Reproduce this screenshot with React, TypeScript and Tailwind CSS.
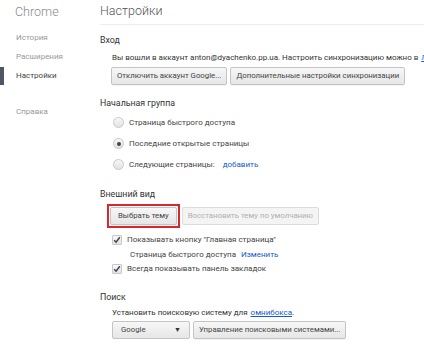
import React from "react";

const F = { fontFamily: 'Roboto, "Noto Sans", sans-serif' };

function Btn({ children, disabled, className = "" }: { children: React.ReactNode; disabled?: boolean; className?: string }) {
  return (
    <div
      className={
        "h-[18px] px-[5px] flex items-center whitespace-nowrap rounded-[2px] border text-[7.8px] " +
        (disabled
          ? "border-[#dcdcdc] bg-[#f4f4f4] text-[#b0b0b0] "
          : "border-[#c4c4c4] bg-gradient-to-b from-[#f7f7f7] to-[#e6e6e6] text-[#444] shadow-[0_1px_0_rgba(0,0,0,0.05)] ") +
        className
      }
    >
      {children}
    </div>
  );
}

function Radio({ checked }: { checked?: boolean }) {
  return (
    <div className="w-[11px] h-[11px] rounded-full border border-[#c8c8c8] bg-gradient-to-b from-[#f8f8f8] to-[#e2e2e2] flex items-center justify-center">
      {checked && <div className="w-[4px] h-[4px] rounded-full bg-[#444]" />}
    </div>
  );
}

function Check() {
  return (
    <div className="w-[10px] h-[10px] rounded-[1px] border border-[#c8c8c8] bg-gradient-to-b from-[#f8f8f8] to-[#e4e4e4] flex items-center justify-center">
      <svg width="8" height="8" viewBox="0 0 8 8">
        <path d="M1.2 4.2 L3.1 6.2 L6.8 1.2" fill="none" stroke="#444" strokeWidth="1.5" />
      </svg>
    </div>
  );
}

export default function App() {
  return (
    <div className="w-[424px] h-[345px] bg-white overflow-hidden flex text-[#333]" style={F}>
      {/* Sidebar */}
      <div className="w-[100px] shrink-0 flex flex-col">
        <div className="h-[24px] pl-[15px] flex items-center text-[12.5px] text-[#8a8a8a] font-light">Chrome</div>
        <div className="mt-[4px] h-[19px] pl-[16px] flex items-center text-[8px] text-[#999]">История</div>
        <div className="h-[19px] pl-[16px] flex items-center text-[8px] text-[#999]">Расширения</div>
        <div className="h-[19px] flex items-center text-[8px] text-[#444]">
          <div className="w-[4px] h-[18px] bg-[#4e5565] mr-[12px]" />
          Настройки
        </div>
        <div className="h-[17px]" />
        <div className="h-[19px] pl-[16px] flex items-center text-[8px] text-[#999]">Справка</div>
      </div>

      {/* Main */}
      <div className="flex-1 flex flex-col min-w-0">
        <div className="h-[25px] flex items-center border-b border-[#eeeeee] text-[12.5px] text-[#555] font-light pb-[1px]">
          Настройки
        </div>

        {/* Вход */}
        <div className="mt-[9px] h-[14px] flex items-center text-[8.8px] text-[#333]">Вход</div>
        <div className="pl-[12px] mt-[4px] h-[12px] flex items-center text-[8px] text-[#333] whitespace-nowrap">
          Вы вошли в аккаунт anton@dyachenko.pp.ua. Настроить синхронизацию можно в{" "}
          <span className="ml-[3px] text-[#1558d6] underline">Личном кабинете</span>
        </div>
        <div className="pl-[11px] mt-[3px] flex gap-[3px]">
          <Btn>Отключить аккаунт Google...</Btn>
          <Btn>Дополнительные настройки синхронизации</Btn>
        </div>

        {/* Начальная группа */}
        <div className="mt-[12px] h-[14px] flex items-center text-[8.8px] text-[#333]">Начальная группа</div>
        <div className="pl-[13px] flex flex-col mt-[1px]">
          <div className="h-[21px] flex items-center gap-[5px] text-[8px] text-[#444]">
            <Radio /> Страница быстрого доступа
          </div>
          <div className="h-[21px] flex items-center gap-[5px] text-[8px] text-[#444]">
            <Radio checked /> Последние открытые страницы
          </div>
          <div className="h-[21px] flex items-center gap-[5px] text-[8px] text-[#444]">
            <Radio /> Следующие страницы: <span className="ml-[3px] text-[#1558d6]">добавить</span>
          </div>
        </div>

        {/* Внешний вид */}
        <div className="mt-[13px] h-[14px] flex items-center text-[8.8px] text-[#333]">Внешний вид</div>
        <div className="pl-[7px] mt-[2px] flex items-center gap-[2px]">
          <div className="border-2 border-[#d9262c] p-[1px]">
            <Btn className="px-[7px]">Выбрать тему</Btn>
          </div>
          <Btn disabled>Восстановить тему по умолчанию</Btn>
        </div>
        <div className="pl-[12px] mt-[5px] flex flex-col">
          <div className="h-[14px] flex items-center gap-[5px] text-[8px] text-[#444]">
            <Check /> Показывать кнопку "Главная страница"
          </div>
          <div className="h-[15px] pl-[18px] flex items-center text-[8px] text-[#444]">
            Страница быстрого доступа <span className="ml-[5px] text-[#1558d6]">Изменить</span>
          </div>
          <div className="h-[13px] flex items-center gap-[5px] text-[8px] text-[#444]">
            <Check /> Всегда показывать панель закладок
          </div>
        </div>

        {/* Поиск */}
        <div className="mt-[16px] h-[14px] flex items-center text-[8.8px] text-[#333]">Поиск</div>
        <div className="pl-[12px] mt-[2px] h-[12px] flex items-center text-[8px] text-[#333] whitespace-nowrap">
          Установить поисковую систему для <span className="ml-[3px] text-[#1558d6] underline">омнибокса</span>.
        </div>
        <div className="pl-[12px] mt-[2px] flex gap-[3px]">
          <div className="w-[78px] h-[18px] px-[8px] flex items-center justify-between rounded-[2px] border border-[#c4c4c4] bg-gradient-to-b from-[#f7f7f7] to-[#e6e6e6] text-[7.8px] text-[#444]">
            <span>Google</span>
            <span className="text-[7px] text-[#333]">▼</span>
          </div>
          <Btn>Управление поисковыми системами...</Btn>
        </div>
      </div>
    </div>
  );
}
